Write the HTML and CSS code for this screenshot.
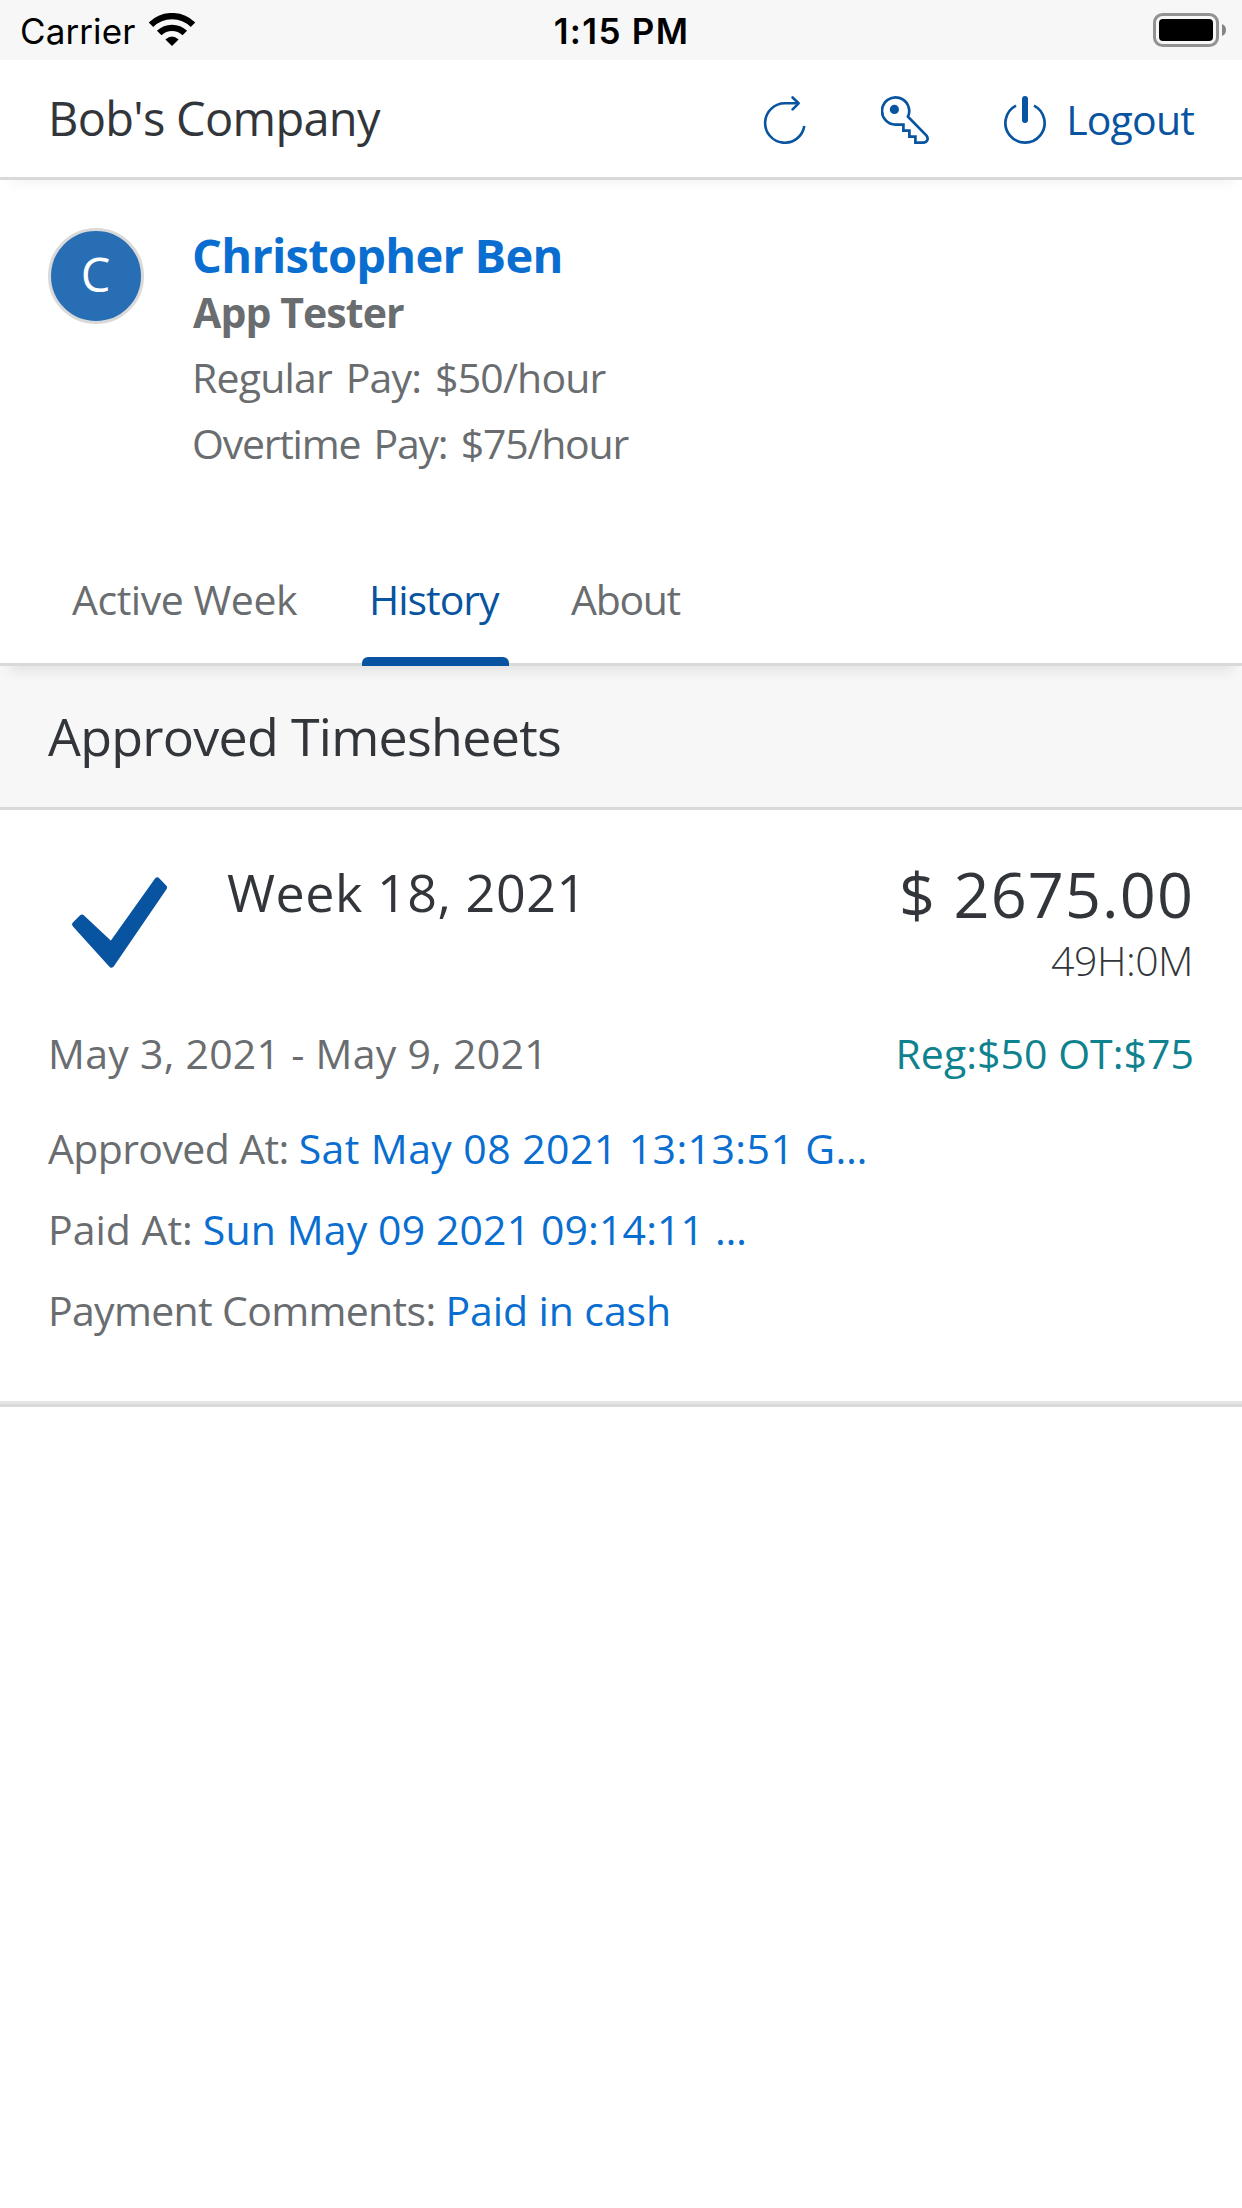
FILE: index.html
```
<!DOCTYPE html>
<html lang="en">
<head>
<meta charset="utf-8">
<title>Approved Timesheets</title>
<link rel="stylesheet" href="styles.css">
</head>
<body>
<div class="status-bar">
  <div class="carrier">
    <span class="carrier-name">Carrier</span>
    <svg class="wifi" viewBox="0 0 46 34" aria-hidden="true">
      <g fill="none" stroke="#000" stroke-width="6.4">
        <path d="M2 11.8A29.8 29.8 0 0 1 44 11.8"/>
        <path d="M10.2 20.1A18.2 18.2 0 0 1 35.8 20.1"/>
      </g>
      <path d="M23 33L16.4 26.4Q23 20.4 29.6 26.4Z"/>
    </svg>
  </div>
  <div class="clock">1:15 PM</div>
  <svg class="battery" viewBox="0 0 74 34" aria-hidden="true">
    <rect x="1.5" y="1.5" width="63" height="31" rx="8" fill="none" stroke="#929292" stroke-width="3"/>
    <rect x="6" y="6" width="54" height="22" rx="4"/>
    <path d="M69 11Q73 12.5 73 17T69 23Z" fill="#858585"/>
  </svg>
</div>

<header class="app-header">
  <h1 class="company">Bob's Company</h1>
  <nav class="actions">
    <svg class="icon" viewBox="0 0 48 48" role="img" aria-label="Refresh">
      <g fill="none" stroke="#0854a0" stroke-width="2.6">
        <path d="M37 7.3H24A19.7 19.7 0 1 0 43.3 30"/>
        <path d="M31.6 1.5L37.6 7.3L31.6 13.4" stroke-linecap="round" stroke-linejoin="round"/>
      </g>
    </svg>
    <svg class="icon" viewBox="0 0 48 48" role="img" aria-label="Change password">
      <path d="M27 20.6A13.6 13.6 0 1 0 15 28.6H22.4V34.6H28.4V40.6H34.4V46.6H42C46 46.4 48 43 45.5 39.6Z" fill="none" stroke="#0854a0" stroke-width="2.7"/>
      <circle cx="13.4" cy="13.4" r="4.6" fill="#0854a0"/>
    </svg>
    <a class="logout">
      <svg class="icon" viewBox="0 0 48 48" aria-hidden="true">
        <path d="M15 9.6A19.6 19.6 0 1 0 33 9.6" fill="none" stroke="#0854a0" stroke-width="2.7"/>
        <path d="M24 3V24" stroke="#0854a0" stroke-width="6" stroke-linecap="round"/>
      </svg>
      <span class="logout-label">Logout</span>
    </a>
  </nav>
</header>

<section class="profile">
  <div class="avatar">C</div>
  <div class="profile-info">
    <h2 class="name">Christopher Ben</h2>
    <p class="role">App Tester</p>
    <p class="pay">Regular Pay: $50/hour</p>
    <p class="pay pay-overtime">Overtime Pay: $75/hour</p>
  </div>
</section>

<nav class="tabs">
  <a class="tab">Active Week</a>
  <a class="tab tab-selected">History</a>
  <a class="tab tab-about">About</a>
</nav>

<main>
  <h2 class="section-title">Approved Timesheets</h2>
  <article class="timesheet">
    <div class="summary">
      <svg class="check" viewBox="0 0 96 96" aria-hidden="true">
        <path d="M10 43.7L3.2 50.4L39.4 90.6L92 13.5L85.3 6.5L41 68.8Q39 70.8 36.7 68.8Z" fill="#0854a0" stroke="#0854a0" stroke-width="6" stroke-linejoin="round"/>
      </svg>
      <h3 class="week">Week 18, 2021</h3>
      <div class="totals">
        <div class="amount">$ 2675.00</div>
        <div class="hours">49H:0M</div>
      </div>
    </div>
    <div class="period">
      <span class="dates">May 3, 2021 - May 9, 2021</span>
      <span class="rates">Reg:$50 OT:$75</span>
    </div>
    <dl class="details">
      <div class="detail approved"><dt>Approved At:</dt><dd>Sat May 08 2021 13:13:51 G…</dd></div>
      <div class="detail paid"><dt>Paid At:</dt><dd>Sun May 09 2021 09:14:11 …</dd></div>
      <div class="detail comments"><dt>Payment Comments:</dt><dd>Paid in cash</dd></div>
    </dl>
  </article>
</main>
</body>
</html>
```
FILE: styles.css
```
* { box-sizing: border-box; }

body {
  margin: 0;
  background: #fff;
  color: #32363a;
  font-family: "Open Sans", sans-serif;
  font-size: 41px;
}

h1, h2, h3, p, dl, dd { margin: 0; font-weight: 400; }
svg { display: block; flex: none; }

/* Phone status bar */
.status-bar {
  display: grid;
  grid-template-columns: 1fr auto 1fr;
  height: 60px;
  padding: 0 15px 0 20px;
  background: #f7f7f7;
  color: #000;
  font-family: Inter, sans-serif;
  font-size: 35px;
  line-height: 62px;
}
.carrier { display: flex; gap: 14px; }
.carrier-name { letter-spacing: .1px; }
.wifi { width: 46px; height: 34px; margin-top: 13px; }
.clock { font-weight: 600; letter-spacing: 1.31px; margin-right: 4px; }
.battery { width: 74px; height: 34px; margin-top: 13px; justify-self: end; }

/* Header */
.app-header {
  position: relative;
  display: flex;
  justify-content: space-between;
  align-items: center;
  height: 120px;
  padding: 0 48px;
  border-bottom: 3px solid #d9d9d9;
  box-shadow: 0 12px 12px -9px rgba(0, 0, 0, .05);
}
.company { font-size: 47px; letter-spacing: -.7px; padding-bottom: 2px; }
.actions { display: flex; align-items: center; gap: 72px; color: #0854a0; }
.icon { width: 48px; height: 48px; margin-top: 3px; }
.logout { display: flex; align-items: center; gap: 17px; }
.logout-label { padding-top: 1px; letter-spacing: -.83px; }

/* Employee */
.profile { display: flex; gap: 48px; height: 360px; padding: 47px 48px 0; }
.avatar {
  width: 96px;
  height: 96px;
  margin-top: 1px;
  border: 3px solid #d9d9d9;
  border-radius: 50%;
  background: #286eb4;
  color: #fff;
  font-size: 47px;
  line-height: 87px;
  text-align: center;
  text-indent: -1px;
}
.name { color: #0a6ed1; font-size: 47px; font-weight: 700; line-height: 57px; letter-spacing: -.73px; }
.role { margin-left: 1px; color: #6a6d70; font-weight: 700; line-height: 56px; letter-spacing: -.91px; }
.pay { color: #6a6d70; line-height: 66px; letter-spacing: -.82px; word-spacing: 4px; }
.role + .pay { margin-top: 4px; }
.pay-overtime { letter-spacing: -1.24px; }

/* Tabs */
.tabs {
  position: relative;
  display: flex;
  height: 126px;
  padding: 0 72px;
  border-bottom: 3px solid #d9d9d9;
  box-shadow: 0 15px 12px -9px rgba(0, 0, 0, .08);
  color: #6a6d70;
  line-height: 118px;
}
.tab { letter-spacing: -.46px; }
.tab-selected {
  position: relative;
  margin: 0 62px 0 65px;
  padding: 0 10.5px 0 7px;
  color: #0854a0;
  letter-spacing: -1.03px;
}
.tab-selected::after {
  content: "";
  position: absolute;
  left: 0;
  right: 0;
  bottom: -3px;
  height: 9px;
  border-radius: 6px 6px 0 0;
  background: #0854a0;
}
.tab-about { letter-spacing: -1.33px; }

/* Timesheets */
.section-title {
  height: 144px;
  padding-left: 48px;
  border-bottom: 3px solid #d9d9d9;
  background: #f7f7f7;
  font-size: 52px;
  line-height: 140px;
  letter-spacing: -.74px;
}
.timesheet {
  height: 597px;
  padding: 45px 48px 0;
  border-bottom: 3px solid #d9d9d9;
  box-shadow: inset 0 -3px #e4e4e4;
}
.summary { display: flex; height: 168px; }
.check { width: 96px; height: 96px; margin: 19px 59px 0 24px; }
.week { flex: 1; margin-top: 2px; font-size: 52px; line-height: 70px; letter-spacing: .55px; }
.totals { text-align: right; }
.amount { font-size: 63px; line-height: 78px; letter-spacing: 1.1px; }
.hours { margin-right: 1px; font-weight: 300; line-height: 54px; letter-spacing: -.49px; }
.period { display: flex; justify-content: space-between; height: 85px; line-height: 61px; }
.dates { color: #6a6d70; letter-spacing: .27px; }
.rates { color: #0f828f; letter-spacing: .04px; }
.detail { display: flex; gap: 10px; line-height: 81px; white-space: nowrap; }
.detail dt { color: #6a6d70; }
.detail dd { color: #0a6ed1; }
.approved dt { letter-spacing: -.62px; }
.approved dd { letter-spacing: .42px; }
.paid dd { letter-spacing: .12px; }
.comments dt { letter-spacing: -.67px; }
.comments dd { letter-spacing: -.1px; }
```
